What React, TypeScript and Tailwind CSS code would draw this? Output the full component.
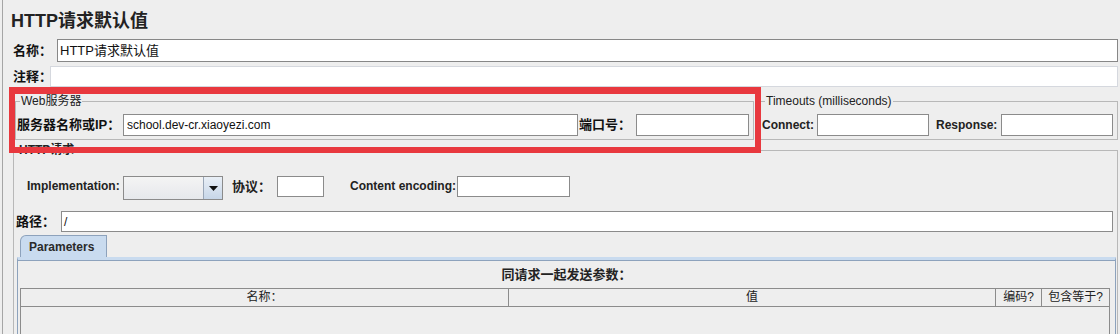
const field = "h-[22px] shrink-0 border border-[#8b8b8b] bg-white";
const label = "shrink-0 whitespace-nowrap";

function Legend({ children, bold }: { children: React.ReactNode; bold?: boolean }) {
  return (
    <legend className={`ml-[4px] px-[1px] text-[12px] leading-[14px] text-[#222] ${bold ? "font-bold" : ""}`}>
      {children}
    </legend>
  );
}

export default function App() {
  return (
    <div className="relative h-[334px] w-[1120px] overflow-hidden bg-[#eeeeee] pl-[2px] font-['Liberation_Sans','Noto_Sans_CJK_SC',sans-serif] text-[#111]">
      <div className="flex h-full flex-col border-l border-[#a5a5a5] pr-[2px]">
        <div className="mt-[10px] h-[22px] pl-[8px] text-[18px] font-bold leading-[22px] text-[#222]">HTTP请求默认值</div>

        <div className="mt-[7px] flex h-[23px] items-center pl-[10px]">
          <span className={`${label} w-[44px] text-[13px] font-bold`}>名称：</span>
          <div className="flex h-[23px] flex-1 items-center border border-[#878787] bg-white pl-[2px] text-[13px]">HTTP请求默认值</div>
        </div>

        <div className="mt-[4px] flex h-[21px] items-center pl-[10px]">
          <span className={`${label} w-[37px] text-[13px] font-bold`}>注释：</span>
          <div className="h-[21px] flex-1 border border-[#d5d8de] bg-white" />
        </div>

        <div className="mt-[7px] flex pl-[12px]">
          <fieldset className="w-[739px] shrink-0 border border-[#b8b8b8] pb-[3px]">
            <Legend>Web服务器</Legend>
            <div className="mt-[6px] flex items-center text-[12px]">
              <span className={`${label} w-[107px] pl-[1px] text-[13px] font-bold`}>服务器名称或IP：</span>
              <div className={`${field} flex w-[455px] items-center pl-[3px]`}>school.dev-cr.xiaoyezi.com</div>
              <span className={`${label} w-[58px] pl-[1px] text-[13px] font-bold`}>端口号：</span>
              <div className={`${field} w-[113px]`} />
            </div>
          </fieldset>
          <fieldset className="ml-[3px] flex-1 border border-[#b8b8b8] pb-[3px]">
            <legend className="ml-[7px] px-[1px] text-[12px] leading-[14px] text-[#222]">Timeouts (milliseconds)</legend>
            <div className="mt-[6px] flex items-center pl-[4px] text-[12px] font-bold text-[#222]">
              <span className={`${label} w-[55px]`}>Connect:</span>
              <div className={`${field} w-[112px]`} />
              <span className={`${label} ml-[7px] w-[65px]`}>Response:</span>
              <div className={`${field} w-[112px]`} />
            </div>
          </fieldset>
        </div>

        <fieldset className="ml-[10px] mt-[3px] flex-1 border border-[#b8b8b8]">
          <Legend bold>HTTP请求</Legend>
          <div className="mt-[19px] flex items-start pl-[13px] text-[12px] font-bold text-[#222]">
            <span className={`${label} w-[96px] leading-[21px]`}>Implementation:</span>
            <div className="flex h-[24px] w-[100px] shrink-0 border border-[#8b8b8b]">
              <div className="flex-1 bg-gradient-to-b from-[#f4f4f4] to-[#e6e8ec]" />
              <div className="flex w-[19px] items-center justify-center border-l border-[#9aa7b8] bg-gradient-to-b from-[#e9eff6] to-[#c7d6e8]">
                <svg width="9" height="5" viewBox="0 0 9 5"><path d="M0 0h9L4.5 5z" fill="#111" /></svg>
              </div>
            </div>
            <span className={`${label} ml-[9px] w-[45px] text-[13px] leading-[21px]`}>协议：</span>
            <div className="h-[21px] w-[47px] shrink-0 border border-[#8b8b8b] bg-white" />
            <span className={`${label} ml-[26px] w-[107px] leading-[21px]`}>Content encoding:</span>
            <div className="h-[21px] w-[113px] shrink-0 border border-[#8b8b8b] bg-white" />
          </div>

          <div className="mr-[4px] mt-[11px] flex h-[21px] items-center pl-[2px]">
            <span className={`${label} w-[45px] text-[13px] font-bold`}>路径：</span>
            <div className="flex h-[21px] flex-1 items-center border border-[#8b8b8b] bg-white pl-[2px] text-[12px]">/</div>
          </div>

          <div className="ml-[6px] mt-[3px] flex h-[22px] w-[87px] items-center rounded-tl-[6px] border border-b-0 border-[#8da2bc] bg-[#c9dbef] pl-[8px] text-[12px] font-bold text-[#2a2a2a]">
            Parameters
          </div>
          <div className="ml-[3px] mr-[1px] h-[120px] border border-t-[3px] border-[#8da2bc] border-t-[#c9dbef] bg-[#eeeeee]">
            <div className="h-[2px] border-t border-[#8da2bc]" />
            <div className="mt-[5px] text-center text-[13px] font-bold leading-[16px] text-[#222]">同请求一起发送参数：</div>
            <div className="ml-[2px] mr-[5px] mt-[5px] h-[80px] border-x border-[#8b8b8b]">
              <div className="grid h-[19px] grid-cols-[487px_487px_46px_1fr] border-y border-[#8b8b8b] text-[12px] leading-[17px] text-[#222]">
                <div className="text-center">名称：</div>
                <div className="border-l border-[#8b8b8b] text-center">值</div>
                <div className="border-l border-[#8b8b8b] text-center">编码?</div>
                <div className="border-l border-[#8b8b8b] text-center">包含等于?</div>
              </div>
            </div>
          </div>
        </fieldset>
      </div>

      <div className="absolute left-[9px] top-[87px] h-[66px] w-[752px] border-[6px] border-t-[7px] border-[#e8383e]" />
    </div>
  );
}
